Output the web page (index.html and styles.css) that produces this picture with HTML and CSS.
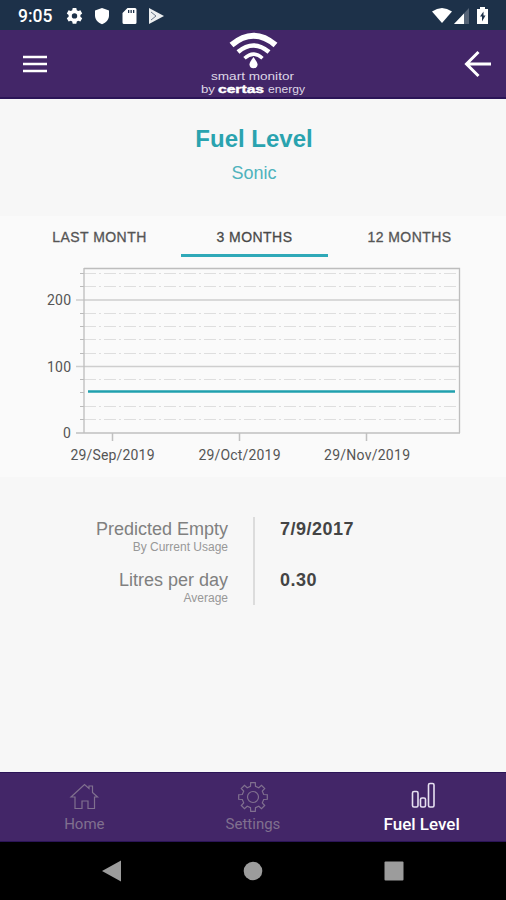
FILE: index.html
```html
<!DOCTYPE html>
<html lang="en">
<head>
<meta charset="UTF-8" />
<meta name="viewport" content="width=device-width, initial-scale=1" />
<title>Fuel Level</title>
<link rel="stylesheet" href="styles.css">
</head>
<body>
<div class="status-bar">
  <span class="time">9:05</span>
  <svg class="status-left" width="98" height="20" viewBox="0 0 98 20">
    <g fill="#fff">
      <path fill-rule="evenodd" d="M6.7 2h3.6l.5 2.3 1.4.8 2.2-.8 1.8 3.2-1.8 1.5v1.8l1.8 1.5-1.8 3.2-2.2-.8-1.4.8-.5 2.3H6.7l-.5-2.3-1.4-.8-2.2.8-1.8-3.2 1.8-1.5V9L.8 7.500l1.800-3.200 2.200.8 1.400-.8zM8.500 7.200a2.700 2.700 0 1 0 0 5.400 2.700 2.700 0 0 0 0-5.400z"/>
      <path d="M36 2l7 2.500v5c0 4-2.700 7-7 8.700-4.300-1.700-7-4.700-7-8.700v-5z"/>
      <path fill-rule="evenodd" d="M61.500 2H69q1.500 0 1.500 1.500v13Q70.500 18 69 18H58q-1.500 0-1.500-1.500V7zM62 4v3h1.300V4zm2.500 0v3h1.300V4zm2.500 0v3h1.300V4z"/>
      <path d="M83 2l15 8-15 8z" opacity=".92"/>
    </g>
    <path d="M85 6l5 4-5 4" stroke="#6b7889" stroke-width="1" fill="none"/>
  </svg>
  <svg class="status-right" width="58" height="20" viewBox="0 0 58 20">
    <path d="M0 5.500q10-7 20 0L10 17z" fill="#fff"/>
    <path d="M37 2v16H22z" fill="#566477"/>
    <path d="M32 7.500V18H22z" fill="#fff"/>
    <path d="M48 3V1h5v2h3v15H45V3z" fill="#fff"/>
    <path d="M51.500 5.500l-3.500 5h2v5l3.500-6h-2z" fill="#1d3149"/>
  </svg>
</div>

<header class="header">
  <svg width="24" height="20" viewBox="0 0 24 20">
    <path d="M0 3h24M0 10h24M0 17h24" stroke="#fff" stroke-width="2.700"/>
  </svg>
  <svg class="logo" width="112" height="68" viewBox="0 0 112 68">
    <g fill="none" stroke="#fff">
      <path d="M34.500 15Q56.500-3.500 78.500 15" stroke-width="6"/>
      <path d="M41 22Q56.500 9 72 22" stroke-width="4.500"/>
      <path d="M47.500 28.300Q56.500 20 65.500 28.300" stroke-width="3.500"/>
    </g>
    <path d="M56.500 27q4 5.500 4 7.200a4 4 0 0 1-8 0q0-1.700 4-7.200z" fill="#fff"/>
    <text x="14" y="50" textLength="83" lengthAdjust="spacingAndGlyphs" class="logo-text">smart monitor</text>
    <text x="4" y="62.500" textLength="14" lengthAdjust="spacingAndGlyphs" class="logo-text">by</text>
    <text x="21" y="62.500" textLength="46" lengthAdjust="spacingAndGlyphs" class="logo-text logo-bold">certas</text>
    <text x="71" y="62.500" textLength="37" lengthAdjust="spacingAndGlyphs" class="logo-text">energy</text>
  </svg>
  <svg width="27" height="28" viewBox="0 0 27 28">
    <path d="M27 14H2M14.500 2L2.500 14l12 12" fill="none" stroke="#fff" stroke-width="3"/>
  </svg>
</header>

<main class="content">
  <h1 class="title">Fuel Level</h1>
  <p class="subtitle">Sonic</p>

  <section class="history">
    <div class="tabs">
      <span class="tab">LAST MONTH</span>
      <span class="tab active">3 MONTHS</span>
      <span class="tab">12 MONTHS</span>
    </div>
    <svg class="chart" width="506" height="219" viewBox="0 258 506 219">
      <!-- minor grid -->
      <path class="minor" d="M84 273.500h375M84 286.500h375M84 313.500h375M84 326.500h375M84 339.500h375M84 353.500h375M84 379.500h375M84 406.500h375M84 419.500h375"/>
      <path class="tick" d="M80 273.500h4M80 286.500h4M80 313.500h4M80 326.500h4M80 339.500h4M80 353.500h4M80 379.500h4M80 392.500h4M80 406.500h4M80 419.500h4"/>
      <!-- major grid and axes -->
      <path class="major" d="M76 300h384M76 366.500h384"/>
      <path class="frame" d="M84 268.500h375.500V433M84 268v165"/>
      <path class="axis" d="M76 433h384M112.500 433v8M239.500 433v8M366.500 433v8"/>
      <path class="series" d="M88 391.500h367"/>
      <g class="axis-text">
        <text x="47" y="304.500" textLength="24">200</text>
        <text x="47" y="371.500" textLength="24">100</text>
        <text x="63" y="438">0</text>
        <text x="70.500" y="460" textLength="84">29/Sep/2019</text>
        <text x="198.500" y="460" textLength="82">29/Oct/2019</text>
        <text x="324" y="460" textLength="86">29/Nov/2019</text>
      </g>
    </svg>
  </section>

  <section class="stats">
    <div class="labels">
      <p class="label">Predicted Empty</p>
      <p class="note">By Current Usage</p>
      <p class="label">Litres per day</p>
      <p class="note">Average</p>
    </div>
    <div class="values">
      <p class="value">7/9/2017</p>
      <p class="value">0.30</p>
    </div>
  </section>
</main>

<nav class="nav">
  <div class="nav-item">
    <svg width="32" height="32" viewBox="0 0 32 32">
      <path d="M3 16L16.500 3.500l4.500 4V5h3.500v6.500l5 4.500h-3v11.500h-6.500V20h-6v7.500H7V16z"/>
    </svg>
    <span>Home</span>
  </div>
  <div class="nav-item">
    <svg width="32" height="32" viewBox="0 0 32 32">
      <path d="M26.700 13.500L30.300 13.700V18.300L26.700 18.500 25.300 21.800 27.700 24.500 24.500 27.700 21.800 25.300 18.500 26.700 18.300 30.300H13.700L13.500 26.700 10.200 25.300 7.500 27.700 4.300 24.500 6.700 21.800 5.300 18.500 1.700 18.300V13.700L5.300 13.500 6.700 10.200 4.300 7.500 7.500 4.300 10.200 6.700 13.500 5.300 13.700 1.700H18.300L18.500 5.300 21.800 6.700 24.500 4.300 27.700 7.500 25.300 10.200z"/>
      <circle cx="16" cy="16" r="5.500"/>
    </svg>
    <span>Settings</span>
  </div>
  <div class="nav-item active">
    <svg width="32" height="32" viewBox="0 0 32 32">
      <rect x="6.500" y="10.500" width="5.500" height="15.500" rx="1.500"/>
      <rect x="14.500" y="17" width="5" height="9" rx="1.500"/>
      <rect x="22.500" y="2.500" width="5.500" height="23.500" rx="1.500"/>
    </svg>
    <span>Fuel Level</span>
  </div>
</nav>

<div class="system-bar">
  <svg width="20" height="22" viewBox="0 0 20 22"><path d="M0 11L19 .5v21z"/></svg>
  <svg width="20" height="20" viewBox="0 0 20 20"><circle cx="10" cy="10" r="9.300"/></svg>
  <svg width="20" height="20" viewBox="0 0 20 20"><rect x=".5" y=".5" width="19" height="19" rx="1"/></svg>
</div>
</body>
</html>
```

FILE: styles.css
```css
* {
  margin: 0; padding: 0; box-sizing: border-box;
}
body {
  width: 506px;
  height: 900px;
  display: flex;
  flex-direction: column;
  overflow: hidden;
  background: #f7f7f7;
  font-family: "Liberation Sans", Arial, sans-serif;
}
svg {
  display: block;
  flex-shrink: 0;
}

/* Top bars */
.status-bar {
  height: 30px;
  display: flex;
  align-items: center;
  padding: 1px 16px 0 18px;
  background: #1d3149;
  color: #fff;
}
.time {
  width: 48px;
  font: 500 17.5px Roboto, sans-serif;
}
.status-right {
  margin-left: auto;
}
.header {
  height: 69px;
  display: flex;
  align-items: center;
  justify-content: space-between;
  padding: 0 15px 0 23px;
  background: #432668;
  border-bottom: 2px solid #2b1457;
}
.logo {
  margin-right: 5px;
}
.logo-text {
  font-size: 11px;
  fill: #ddd6e6;
}
.logo-bold {
  font-weight: 700;
  fill: #fff;
  stroke: #fff;
  stroke-width: .4px;
}

/* Content */
.content {
  flex: 1;
}
.title {
  margin-top: 26px;
  padding-left: 2px;
  font-size: 24px;
  line-height: 28px;
  text-align: center;
  color: #2aa3af;
}
.subtitle {
  margin-top: 9px;
  padding-left: 2px;
  font-size: 18px;
  line-height: 22px;
  text-align: center;
  color: #4fb3bd;
}
.history {
  margin-top: 32px;
  height: 261px;
  background: #fafafa;
}
.tabs {
  display: grid;
  grid-template-columns: repeat(3, 147px);
  justify-content: center;
  column-gap: 8px;
  padding-left: 3px;
}
.tab {
  height: 41px;
  line-height: 42px;
  font-size: 14px;
  letter-spacing: .45px;
  text-align: center;
  color: #555;
  -webkit-text-stroke: .3px #555;
  border-bottom: 3px solid transparent;
}
.tab.active {
  color: #444;
  border-bottom-color: #2fa9b8;
}
.chart {
  margin-top: 1px;
}
.minor {
  stroke: #dedede;
  stroke-dasharray: 12 3 2 3;
}
.tick {
  stroke: #bbb;
}
.major {
  stroke: #cecece;
  stroke-width: 1.5;
}
.frame {
  fill: none;
  stroke: #bdbdbd;
  stroke-width: 1.3;
}
.axis {
  stroke: #c0c0c0;
  stroke-width: 1.5;
}
.series {
  stroke: #20a0ae;
  stroke-width: 2.4;
}
.axis-text {
  font: 14px Roboto, sans-serif;
  fill: #555;
}

.stats {
  display: flex;
  margin-top: 40px;
  height: 88px;
}
.labels {
  width: 255px;
  padding-right: 25px;
  border-right: 2px solid #dcdcdc;
  text-align: right;
}
.label {
  height: 23px;
  font-size: 18px;
  line-height: 24px;
  color: #808080;
}
.note {
  height: 28px;
  font-size: 12px;
  line-height: 15px;
  color: #989898;
}
.values {
  padding-left: 25px;
}
.value {
  height: 51px;
  font-size: 18px;
  font-weight: 700;
  line-height: 24px;
  letter-spacing: .5px;
  color: #444;
}

/* Bottom bars */
.nav {
  height: 70px;
  display: grid;
  grid-template-columns: repeat(3, 1fr);
  background: #432668;
  border-top: 1px solid #2b1457;
  border-bottom: 1px solid #2b1457;
}
.nav-item {
  display: flex;
  flex-direction: column;
  align-items: center;
  padding-top: 8px;
  font: 15px/22px Roboto, sans-serif;
  color: #80708f;
}
.nav-item svg {
  fill: none;
  stroke: #80708f;
  stroke-width: 1.2;
}
.nav-item.active {
  font-size: 17px;
  font-weight: 500;
  color: #fff;
}
.nav-item.active svg {
  stroke: #e6e0f0;
  stroke-width: 1.6;
}
.system-bar {
  height: 58px;
  display: flex;
  align-items: center;
  justify-content: center;
  gap: 121px;
  background: #000;
}
.system-bar svg {
  fill: #9c9c9c;
}
```
